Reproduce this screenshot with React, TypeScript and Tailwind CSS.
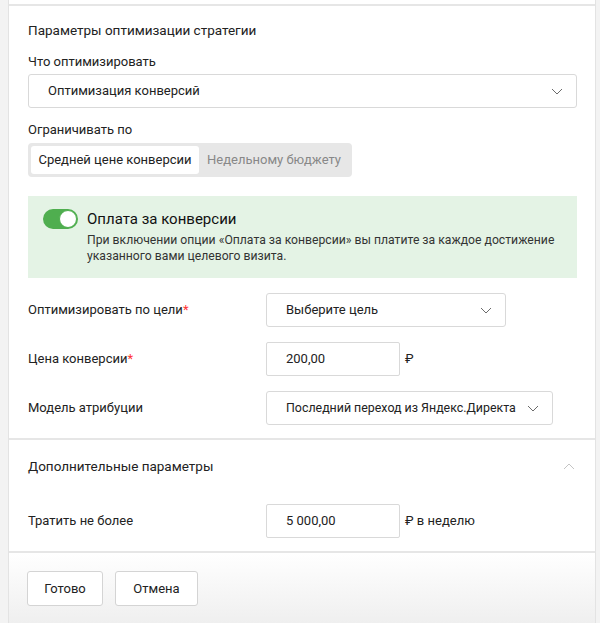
import React from "react";

const font = { fontFamily: "Roboto, 'Noto Sans', sans-serif" };

function Chevron({ up = false }: { up?: boolean }) {
  return (
    <svg width="12" height="7" viewBox="0 0 12 7" className={up ? "rotate-180" : ""}>
      <path d="M1 1l5 5 5-5" fill="none" stroke={up ? "#c4c4c4" : "#6b6b6b"} strokeWidth="1" />
    </svg>
  );
}

function Select({ value, className }: { value: string; className: string }) {
  return (
    <div
      className={`flex h-[34px] items-center justify-between whitespace-nowrap rounded-[3px] border border-[#d9d9d9] bg-white pl-[19px] pr-[13px] ${className}`}
    >
      <span>{value}</span>
      <Chevron />
    </div>
  );
}

function Input({ value }: { value: string }) {
  return (
    <div className="flex h-[34px] w-[134px] items-center rounded-[2px] border border-[#d9d9d9] bg-white pl-[19px]">
      {value}
    </div>
  );
}

function Row({
  label,
  required,
  children,
}: {
  label: string;
  required?: boolean;
  children: React.ReactNode;
}) {
  return (
    <div className="flex items-center">
      <div className="w-[238px]">
        {label}
        {required && <span className="text-[#ff3333]">*</span>}
      </div>
      {children}
    </div>
  );
}

export default function App() {
  return (
    <div
      className="flex h-[623px] w-[600px] bg-[#f3f3f3] pl-[8px] pr-[4px] text-[13px] leading-[20px] text-[#222]"
      style={font}
    >
      <div className="flex flex-1 flex-col border-x border-[#e3e3e3] bg-white">
        <div className="h-[6px] border-b-2 border-[#e6e6e6]" />

        <div className="flex flex-col border-b-2 border-[#e6e6e6] pl-[19px] pr-[18px] pt-[14px] pb-[13px]">
          <div className="text-[13.5px]">Параметры оптимизации стратегии</div>
          <div className="mt-[12px]">Что оптимизировать</div>
          <Select value="Оптимизация конверсий" className="mt-[2px] w-full" />
          <div className="mt-[12px]">Ограничивать по</div>
          <div className="mt-[3px] flex h-[34px] w-[324px] items-center rounded-[4px] bg-[#e7e7e7] p-[3px]">
            <div className="flex h-full w-[168px] items-center justify-center rounded-[3px] bg-white">
              Средней цене конверсии
            </div>
            <div className="flex flex-1 items-center justify-center text-[#888]">
              Недельному бюджету
            </div>
          </div>

          <div className="mt-[19px] flex h-[82px] gap-[9px] bg-[#e4f3e5] pl-[15px] pr-[12px] pt-[13px]">
            <div className="relative h-[20px] w-[35px] shrink-0 rounded-full bg-[#4fae4f]">
              <div className="absolute right-[1px] top-[1px] h-[18px] w-[18px] rounded-full border border-[#4fae4f] bg-white" />
            </div>
            <div className="flex flex-col">
              <div className="text-[15px] leading-[20px] text-[#111]">Оплата за конверсии</div>
              <div className="mt-[3px] text-[12.2px] leading-[16px] text-[#333]">
                При включении опции «Оплата за конверсии» вы платите за каждое достижение указанного вами целевого визита.
              </div>
            </div>
          </div>

          <div className="mt-[15px] flex flex-col gap-[15px]">
            <Row label="Оптимизировать по цели" required>
              <Select value="Выберите цель" className="w-[240px]" />
            </Row>
            <Row label="Цена конверсии" required>
              <Input value="200,00" />
              <span className="ml-[5px]">₽</span>
            </Row>
            <Row label="Модель атрибуции">
              <Select value="Последний переход из Яндекс.Директа" className="w-[287px] text-[12.4px]" />
            </Row>
          </div>
        </div>

        <div className="flex flex-col border-b-2 border-[#e6e6e6] pl-[19px] pr-[20px] pt-[16px] pb-[13px]">
          <div className="flex items-center justify-between">
            <span className="text-[13.5px]">Дополнительные параметры</span>
            <Chevron up />
          </div>
          <div className="mt-[28px]">
            <Row label="Тратить не более">
              <Input value="5 000,00" />
              <span className="ml-[5px]">₽ в неделю</span>
            </Row>
          </div>
        </div>

        <div className="flex flex-1 gap-[12px] bg-gradient-to-b from-white to-[#efefef] pl-[18px] pt-[18px]">
          <button className="h-[35px] w-[76px] rounded-[3px] border border-[#d4d4d4] bg-white">Готово</button>
          <button className="h-[35px] w-[83px] rounded-[3px] border border-[#d4d4d4] bg-white">Отмена</button>
        </div>
      </div>
    </div>
  );
}
